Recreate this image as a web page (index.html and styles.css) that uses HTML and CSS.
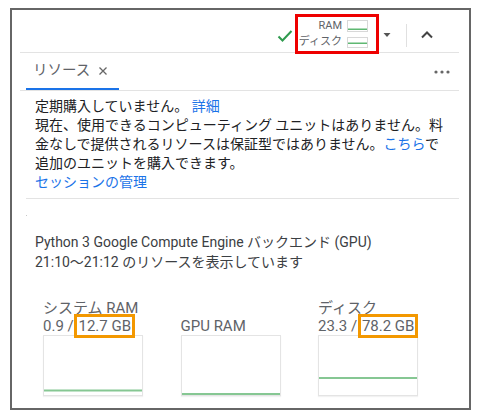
FILE: index.html
```html
<!DOCTYPE html>
<html lang="ja">
<head>
<meta charset="utf-8">
<title>リソース</title>
<link rel="stylesheet" href="styles.css">
</head>
<body>
<div class="frame">
  <header class="topbar">
    <svg class="check" width="16" height="16" viewBox="0 0 16 16"><polyline points="1.5,8.5 5.5,12.5 14.5,3" fill="none" stroke="#2f9a4e" stroke-width="2"/></svg>
    <div class="usage">
      <span class="usage-label">RAM</span>
      <svg class="mini" width="21" height="12" viewBox="0 0 21 12"><rect x="0.5" y="0.5" width="20" height="11" fill="#fff" stroke="#d8d8d8"/><rect x="1" y="8.5" width="19" height="1.5" fill="#5fb872"/></svg>
      <span class="usage-label">ディスク</span>
      <svg class="mini" width="21" height="11" viewBox="0 0 21 11"><rect x="0.5" y="0.5" width="20" height="10" fill="#fff" stroke="#d8d8d8"/><rect x="1" y="5.5" width="19" height="1.5" fill="#5fb872"/></svg>
    </div>
    <svg class="caret" width="10" height="10" viewBox="0 0 10 10"><polygon points="1.5,3 8.5,3 5,7" fill="#555"/></svg>
    <span class="vdiv"></span>
    <svg class="chev" width="16" height="16" viewBox="0 0 16 16"><polyline points="3,10.5 8,5.5 13,10.5" fill="none" stroke="#444" stroke-width="2"/></svg>
  </header>

  <nav class="tabs">
    <div class="tab">
      <span class="tab-name">リソース</span>
      <svg class="tab-close" width="10" height="10" viewBox="0 0 10 10"><path d="M1.5 1.5 L8.5 8.5 M8.5 1.5 L1.5 8.5" stroke="#666" stroke-width="1.3"/></svg>
    </div>
    <svg class="more" width="18" height="4" viewBox="0 0 18 4"><circle cx="2" cy="2" r="1.6" fill="#666"/><circle cx="8" cy="2" r="1.6" fill="#666"/><circle cx="14" cy="2" r="1.6" fill="#666"/></svg>
  </nav>

  <section class="info">
    <p>定期購入していません。 <a class="link">詳細</a></p>
    <p>現在、使用できるコンピューティング ユニットはありません。料金なしで提供されるリソースは保証型ではありません。<a class="link">こちら</a>で追加のユニットを購入できます。</p>
    <p><a class="link">セッションの管理</a></p>
  </section>

  <section class="runtime">
    <span class="blip"></span>
    <p class="runtime-text">Python 3 Google Compute Engine バックエンド (GPU)<br>21:10〜21:12 のリソースを表示しています</p>
  </section>

  <section class="meters">
    <div class="meter">
      <div class="meter-name">システム RAM</div>
      <div class="meter-value">0.9 / <span class="mark">12.7 GB</span></div>
      <div class="chart"><svg class="plot" width="98" height="59" viewBox="0 0 98 59"><line x1="0" x2="98" y1="54.5" y2="54.5" stroke="#86c793" stroke-width="2"/></svg></div>
    </div>
    <div class="meter">
      <div class="meter-name">&nbsp;</div>
      <div class="meter-value">GPU RAM</div>
      <div class="chart"><svg class="plot" width="98" height="59" viewBox="0 0 98 59"><line x1="0" x2="98" y1="58" y2="58" stroke="#86c793" stroke-width="2"/></svg></div>
    </div>
    <div class="meter">
      <div class="meter-name">ディスク</div>
      <div class="meter-value">23.3 / <span class="mark">78.2 GB</span></div>
      <div class="chart"><svg class="plot" width="98" height="59" viewBox="0 0 98 59"><line x1="0" x2="98" y1="42" y2="42" stroke="#86c793" stroke-width="2"/></svg></div>
    </div>
  </section>
</div>
</body>
</html>
```

FILE: styles.css
```css
* { box-sizing: border-box; }
html, body { margin: 0; padding: 0; background: #fff; }
body {
  font-family: Roboto, "Noto Sans CJK JP", sans-serif;
  color: #202124;
}
p { margin: 0; }
svg { display: block; }

.frame {
  margin: 8px 0 0 10px;
  width: 461px;
  height: 402px;
  border: 2px solid #666;
}

/* top bar */
.topbar {
  height: 43px;
  margin: 0 10px 0 8px;
  border-bottom: 1px solid #e3e3e3;
  display: flex;
  align-items: flex-start;
  justify-content: flex-end;
  padding-right: 24px;
}
.check { margin-top: 18px; }
.usage {
  margin-top: 4px;
  margin-left: 2px;
  width: 84px;
  height: 40px;
  border: 3px solid #ee0000;
  background: #fff;
  position: relative;
  display: grid;
  grid-template-columns: 44px 21px;
  grid-template-rows: 16px 16px;
  column-gap: 5px;
  padding: 1px 8px 0 0;
  align-items: center;
}
.usage-label {
  font-size: 11px;
  line-height: 16px;
  color: #5f6368;
  text-align: right;
  white-space: nowrap;
}
.caret { margin: 20px 0 0 3px; }
.vdiv {
  width: 1px;
  height: 23px;
  background: #e0e0e0;
  margin: 14px 0 0 14px;
}
.chev { margin: 17px 0 0 12px; }

/* tabs */
.tabs {
  height: 38px;
  margin: 0 10px 0 8px;
  border-bottom: 1px solid #e3e3e3;
  display: flex;
  align-items: stretch;
}
.tab {
  margin-left: 6px;
  padding: 0 11px 0 7px;
  display: flex;
  align-items: center;
  gap: 8px;
  border-bottom: 2px solid #1a73e8;
}
.tab-name {
  font-size: 14.5px;
  line-height: 18px;
  color: #5f6368;
}
.more {
  margin: 0 7px 0 auto;
  align-self: center;
}

/* info */
.info {
  margin: 0 10px 0 14px;
  padding: 6px 9px;
  border-bottom: 1px solid #e3e3e3;
  font-size: 14px;
  line-height: 19px;
  color: #202124;
}
.link { color: #1a73e8; text-decoration: none; cursor: pointer; }

/* runtime */
.runtime { padding-left: 14px; }
.blip {
  display: block;
  width: 1px;
  height: 1px;
  background: #c8c8c8;
  margin-top: 16px;
}
.runtime-text {
  margin-top: 16px;
  padding-left: 9px;
  font-size: 14px;
  line-height: 20px;
  color: #3c4043;
}

/* meters */
.meters {
  margin-top: 27px;
  padding-left: 31px;
  display: grid;
  grid-template-columns: repeat(3, 100px);
  column-gap: 37.5px;
}
.meter-name, .meter-value {
  font-size: 15px;
  line-height: 18px;
  color: #5f6368;
  white-space: nowrap;
}
.mark {
  outline: 3px solid #f39800;
  padding: 0 1px;
}
.chart {
  height: 61px;
  border: 1px solid #e4e4e4;
  box-shadow: 0 1px 1px rgba(0,0,0,0.05);
  background: #fff;
}
```
